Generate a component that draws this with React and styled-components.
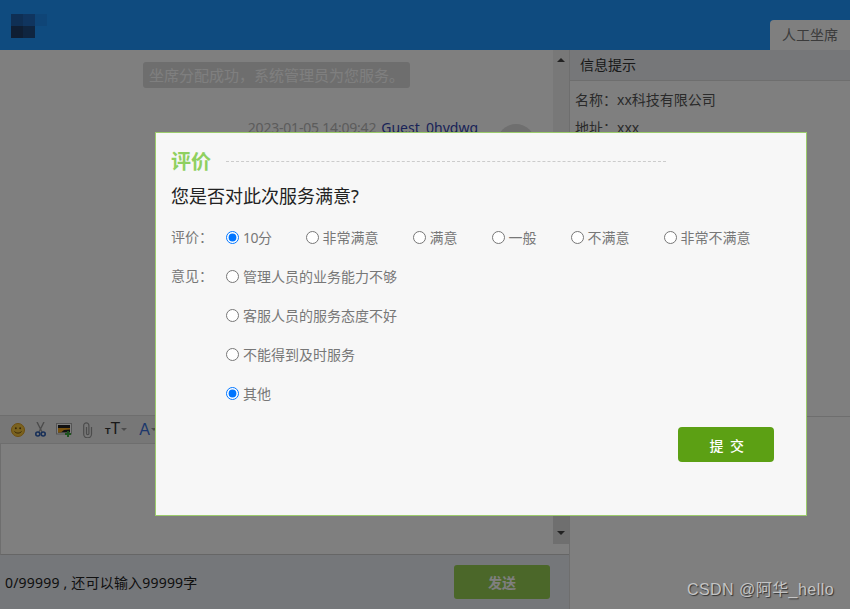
import React from 'react';
import styled, { createGlobalStyle } from 'styled-components';

const GlobalStyle = createGlobalStyle`
  html, body {
    margin: 0;
    padding: 0;
    background: #fff;
  }
  body {
    font-family: "Noto Sans", "Noto Sans CJK SC", sans-serif;
    font-size: 14px;
    color: #333;
  }
`;

const Page = styled.div`
  position: relative;
  width: 850px;
  height: 609px;
  overflow: hidden;
  display: flex;
  flex-direction: column;
`;

const Header = styled.header`
  height: 50px;
  flex: none;
  background: #1e96ff;
  display: flex;
  justify-content: space-between;
  align-items: flex-end;
`;

const Logo = styled.svg`
  width: 36px;
  height: 24px;
  margin: 0 0 12px 11px;
`;

const Tab = styled.div`
  width: 80px;
  height: 30px;
  background: #fff;
  border-radius: 4px 0 0 0;
  color: #777;
  line-height: 30px;
  text-align: center;
`;

const Body = styled.div`
  flex: 1;
  display: flex;
  min-height: 0;
`;

const ChatColumn = styled.section`
  width: 569px;
  flex: none;
  display: flex;
  flex-direction: column;
  border-right: 1px solid #ddd;
`;

const Messages = styled.div`
  height: 365px;
  flex: none;
  display: flex;
`;

const MessageList = styled.div`
  flex: 1;
  padding-top: 12px;
  display: flex;
  flex-direction: column;
  align-items: center;
`;

const Notice = styled.div`
  background: #dcdcdc;
  color: #fff;
  border-radius: 3px;
  font-size: 15px;
  height: 26px;
  line-height: 26px;
  padding: 0 6px;
  white-space: nowrap;
`;

const MessageRow = styled.div`
  align-self: flex-end;
  display: flex;
  gap: 19px;
  margin: 30px 18px 0 0;
`;

const MessageMeta = styled.div`
  display: flex;
  gap: 5px;
  height: 20px;
  line-height: 20px;
  white-space: nowrap;
`;

const Time = styled.span`
  color: #b8b8b8;
  letter-spacing: -0.2px;
`;

const Guest = styled.span`
  color: #3446b0;
`;

const Avatar = styled.div`
  width: 38px;
  height: 38px;
  margin-top: 6px;
  border-radius: 50%;
  background: #dedede;
`;

const Scrollbar = styled.div`
  width: 16px;
  flex: none;
  background: ${p => p.$bg};
  display: flex;
  flex-direction: column;
  justify-content: space-between;
  align-items: center;
  padding: 8px 0;
  box-sizing: border-box;
`;

const Arrow = styled.i`
  width: 0;
  height: 0;
  border-left: 4px solid transparent;
  border-right: 4px solid transparent;
  border-${p => (p.$down ? 'top' : 'bottom')}: 4px solid #444;
`;

const Toolbar = styled.div`
  height: 27px;
  flex: none;
  background: #eee;
  border-top: 1px solid #ddd;
  border-bottom: 1px solid #ddd;
  display: flex;
  align-items: center;
  padding-left: 11px;
  gap: 10px;
`;

const TextSize = styled.span`
  display: flex;
  align-items: baseline;
  font-family: "Liberation Sans", sans-serif;
  color: #333;
  font-size: 16px;
  line-height: 16px;
  margin-left: 2px;
  small {
    font-size: 9px;
    font-weight: bold;
  }
`;

const Caret = styled.i`
  width: 0;
  height: 0;
  align-self: center;
  margin-left: 1px;
  border-left: 3px solid transparent;
  border-right: 3px solid transparent;
  border-top: 3px solid #999;
`;

const ColorA = styled(TextSize)`
  color: #3a6fd8;
`;

const InputArea = styled.div`
  height: 110px;
  flex: none;
  display: flex;
  justify-content: flex-end;
  align-items: flex-start;
  border-left: 1px solid #ddd;
  border-bottom: 1px solid #ccc;
`;

const InputBar = styled(Scrollbar)`
  height: 100px;
  padding: 0 0 9px;
`;

const Footer = styled.div`
  flex: 1;
  background: #ebeef4;
  display: flex;
  justify-content: space-between;
  align-items: center;
  padding: 0 19px 0 5px;
  color: #222;
  letter-spacing: 0.2px;
`;

const SendButton = styled.button`
  width: 96px;
  height: 34px;
  background: #96ce52;
  border: 0;
  border-radius: 3px;
  color: #fff;
  font: inherit;
  font-weight: bold;
`;

const Sidebar = styled.aside`
  flex: 1;
  display: flex;
  flex-direction: column;
`;

const InfoPanel = styled.div`
  height: 366px;
  flex: none;
  border-bottom: 1px solid #ddd;
`;

const InfoTitle = styled.div`
  height: 30px;
  line-height: 30px;
  padding-left: 10px;
  background: #eceff3;
  border-bottom: 1px solid #ddd;
  color: #333;
`;

const InfoList = styled.div`
  padding: 5px 5px 0;
  color: #555;
  line-height: 28px;
`;

const Overlay = styled.div`
  position: absolute;
  inset: 0;
  background: rgba(0, 0, 0, 0.5);
  padding: 132px 0 0 155px;
`;

const Modal = styled.form`
  width: 652px;
  height: 384px;
  box-sizing: border-box;
  background: #f7f7f7;
  border: 1px solid #9ccc6c;
  padding: 15px 32px 0 15px;
  display: flex;
  flex-direction: column;
`;

const TitleRow = styled.div`
  display: flex;
  align-items: center;
  gap: 15px;
  height: 28px;
`;

const Title = styled.h2`
  margin: 0;
  font-size: 20px;
  font-weight: bold;
  line-height: 28px;
  color: #8fd05f;
`;

const TitleLine = styled.div`
  width: 440px;
  margin-top: -2px;
  border-top: 1px dashed #ccc;
`;

const Question = styled.p`
  margin: 7px 0 0;
  font-size: 18px;
  line-height: 26px;
  color: #222;
`;

const FormRow = styled.div`
  display: flex;
  margin-top: ${p => p.$top}px;
`;

const RowLabel = styled.div`
  width: 55px;
  flex: none;
  line-height: 20px;
  color: #777;
`;

const RatingOptions = styled.div`
  display: flex;
  gap: 34px;
`;

const ReasonOptions = styled.div`
  display: flex;
  flex-direction: column;
  gap: 19px;
`;

const Option = styled.label`
  display: flex;
  align-items: center;
  gap: 4px;
  height: 20px;
  color: #777;
  white-space: nowrap;
`;

const ScoreOption = styled(Option)`
  letter-spacing: -0.5px;
`;

const Radio = styled.input.attrs({ type: 'radio' })`
  width: 13px;
  height: 13px;
  margin: 1px 0 0;
  flex: none;
`;

const Actions = styled.div`
  display: flex;
  justify-content: flex-end;
  margin-top: 24px;
`;

const SubmitButton = styled.button`
  width: 96px;
  height: 35px;
  background: #5ca014;
  border: 0;
  border-radius: 4px;
  color: #fff;
  font: inherit;
  font-weight: 500;
  letter-spacing: 1.5px;
  padding: 0 0 0 3px;
`;

const Watermark = styled.div`
  position: absolute;
  right: 16px;
  bottom: 9px;
  font-family: "Liberation Sans", "Noto Sans CJK SC", sans-serif;
  font-size: 16px;
  line-height: 20px;
  letter-spacing: 0.45px;
  color: #c4c4c4;
  text-shadow: 1px 1px 1px #333;
`;

function SmileyIcon() {
  return (
    <svg width="14" height="14" viewBox="0 0 15 15">
      <circle cx="7.5" cy="7.5" r="7" fill="#f4c53f" stroke="#d99a1c" />
      <circle cx="5.2" cy="5.6" r="1" fill="#6b4a10" />
      <circle cx="9.8" cy="5.6" r="1" fill="#6b4a10" />
      <path d="M3.8 9c1 2.4 6.4 2.4 7.4 0" fill="none" stroke="#6b4a10" />
    </svg>
  );
}

function ScissorsIcon() {
  return (
    <svg width="11" height="15" viewBox="0 0 11 15">
      <path d="M2 0l5 10M9 0L4 10" stroke="#999" strokeWidth="1.4" fill="none" />
      <circle cx="2.8" cy="12" r="2" fill="none" stroke="#2f5fb0" strokeWidth="1.6" />
      <circle cx="8.2" cy="12" r="2" fill="none" stroke="#2f5fb0" strokeWidth="1.6" />
    </svg>
  );
}

function ImageIcon() {
  return (
    <svg width="16" height="14" viewBox="0 0 16 14">
      <rect x="0.5" y="0.5" width="15" height="10.5" fill="#fff" stroke="#aaa" />
      <rect x="2" y="2" width="12" height="7.5" fill="#222" />
      <path d="M2 5h12v1.6L8 7 5 9.5H2z" fill="#f2a51d" />
      <path d="M9 11h6M12 8v6" stroke="#3aa43a" strokeWidth="2" />
    </svg>
  );
}

function ClipIcon() {
  return (
    <svg width="11" height="16" viewBox="0 0 11 16">
      <path
        d="M9.5 5v7a3.9 3.9 0 0 1-7.8 0V3.5a2.6 2.6 0 0 1 5.2 0V11.5a1.2 1.2 0 0 1-2.4 0V5"
        fill="none"
        stroke="#999"
        strokeWidth="1.2"
      />
    </svg>
  );
}

const ratings = ['非常满意', '满意', '一般', '不满意', '非常不满意'];
const reasons = ['管理人员的业务能力不够', '客服人员的服务态度不好', '不能得到及时服务', '其他'];

export default function App() {
  return (
    <Page>
      <GlobalStyle />
      <Header>
        <Logo viewBox="0 0 36 24">
          <rect width="12" height="12" fill="#1e5ea8" />
          <rect x="12" width="12" height="12" fill="#206abe" />
          <rect x="24" width="12" height="12" fill="#1e8aee" />
          <rect y="12" width="12" height="12" fill="#1e3c66" />
          <rect x="12" y="12" width="12" height="12" fill="#1e4a80" />
        </Logo>
        <Tab>人工坐席</Tab>
      </Header>
      <Body>
        <ChatColumn>
          <Messages>
            <MessageList>
              <Notice>坐席分配成功，系统管理员为您服务。</Notice>
              <MessageRow>
                <MessageMeta>
                  <Time>2023-01-05 14:09:42</Time>
                  <Guest>Guest_0hydwq</Guest>
                </MessageMeta>
                <Avatar />
              </MessageRow>
            </MessageList>
            <Scrollbar $bg="#f0f0f0">
              <Arrow />
            </Scrollbar>
          </Messages>
          <Toolbar>
            <SmileyIcon />
            <ScissorsIcon />
            <ImageIcon />
            <ClipIcon />
            <TextSize>
              <small>T</small>T<Caret />
            </TextSize>
            <ColorA>
              A<Caret />
            </ColorA>
          </Toolbar>
          <InputArea>
            <InputBar $bg="#dedede">
              <span />
              <Arrow $down />
            </InputBar>
          </InputArea>
          <Footer>
            <span>0/99999 , 还可以输入99999字</span>
            <SendButton type="button">发送</SendButton>
          </Footer>
        </ChatColumn>
        <Sidebar>
          <InfoPanel>
            <InfoTitle>信息提示</InfoTitle>
            <InfoList>
              <div>名称：xx科技有限公司</div>
              <div>地址：xxx</div>
            </InfoList>
          </InfoPanel>
        </Sidebar>
      </Body>
      <Overlay>
        <Modal>
          <TitleRow>
            <Title>评价</Title>
            <TitleLine />
          </TitleRow>
          <Question>您是否对此次服务满意?</Question>
          <FormRow $top={18}>
            <RowLabel>评价：</RowLabel>
            <RatingOptions>
              <ScoreOption>
                <Radio name="rating" defaultChecked />
                10分
              </ScoreOption>
              {ratings.map(r => (
                <Option key={r}>
                  <Radio name="rating" />
                  {r}
                </Option>
              ))}
            </RatingOptions>
          </FormRow>
          <FormRow $top={19}>
            <RowLabel>意见：</RowLabel>
            <ReasonOptions>
              {reasons.map(r => (
                <Option key={r}>
                  <Radio name="reason" defaultChecked={r === '其他'} />
                  {r}
                </Option>
              ))}
            </ReasonOptions>
          </FormRow>
          <Actions>
            <SubmitButton type="button">提 交</SubmitButton>
          </Actions>
        </Modal>
      </Overlay>
      <Watermark>CSDN @阿华_hello</Watermark>
    </Page>
  );
}
